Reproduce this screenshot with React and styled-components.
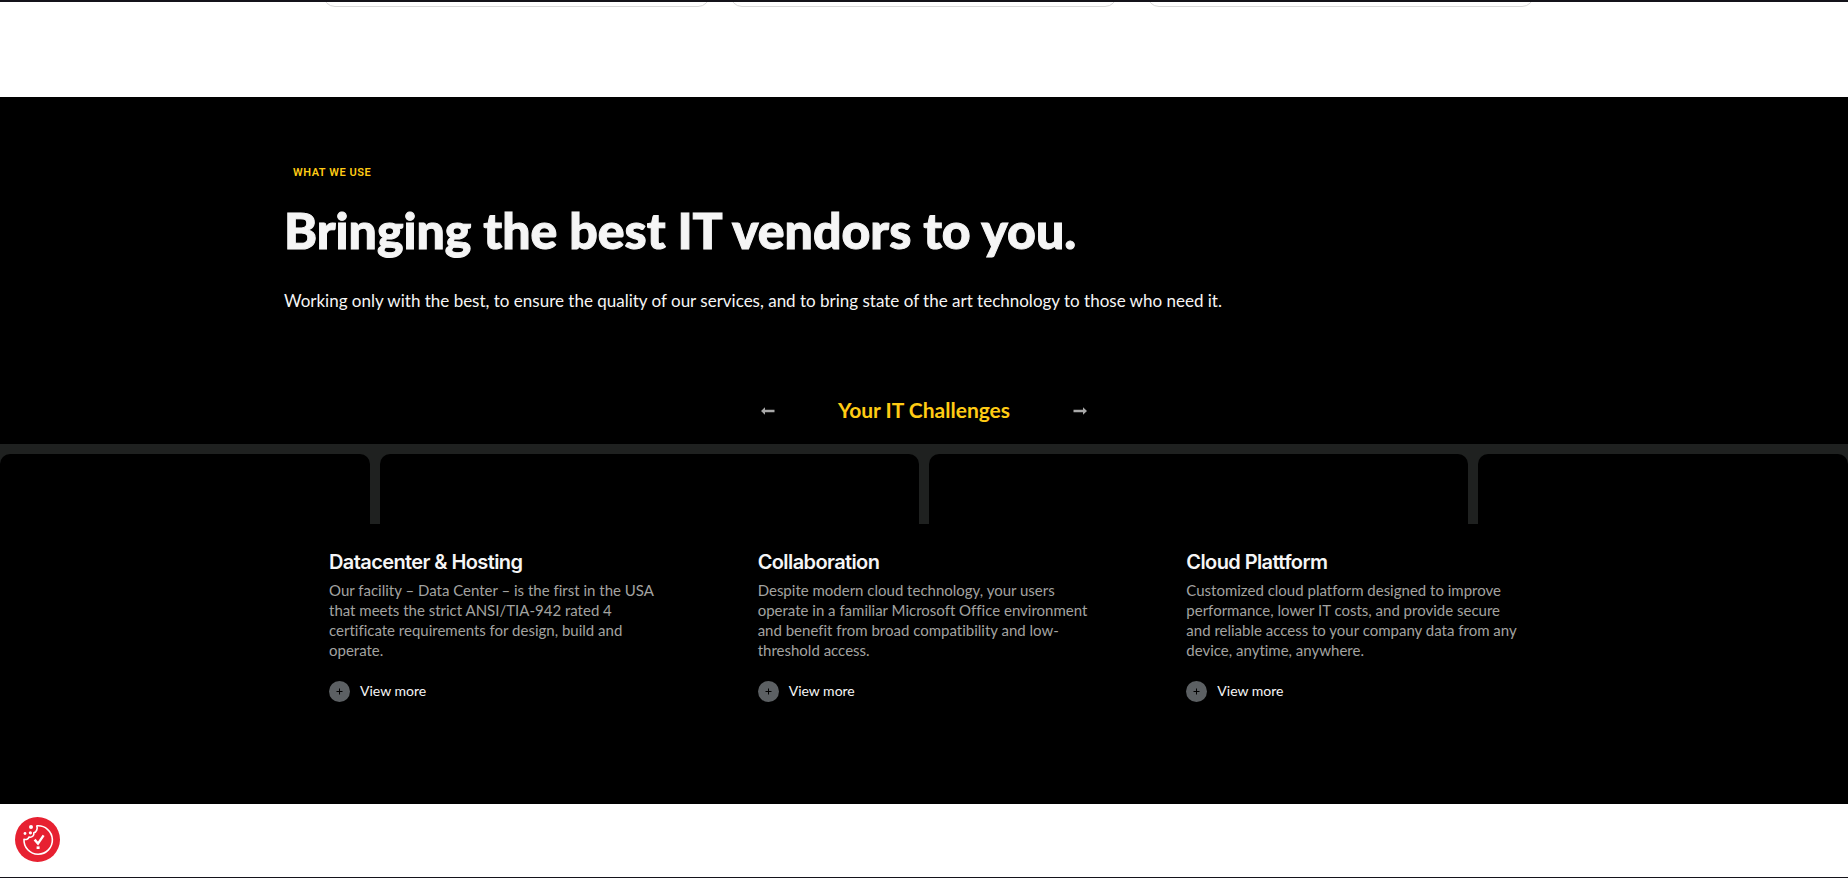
import React from "react";
import styled, { createGlobalStyle } from "styled-components";

const GlobalStyle = createGlobalStyle`
  *, *::before, *::after { box-sizing: border-box; }
  body {
    margin: 0;
    background: #fff;
    font-family: Lato, "Liberation Sans", sans-serif;
    font-variant-ligatures: none;
    color: #f5f5f5;
  }
  h2, h3, p { margin: 0; }
`;

const Page = styled.div`
  display: flex;
  flex-direction: column;
  min-height: 100vh;
  border-top: 2px solid #14131a;
  border-bottom: 1px solid #14131a;
`;

const PreviousSection = styled.section`
  display: flex;
  justify-content: center;
  padding: 0 0 90px 8px;
`;

const CardEnd = styled.div`
  width: 387px;
  height: 5px;
  overflow: hidden;
  display: flex;
  align-items: flex-end;

  &:nth-child(2) {
    margin: 0 30px 0 20px;
  }

  &::after {
    content: "";
    flex: 1;
    height: 40px;
    border: 1px solid #d9d9d9;
    border-radius: 12px;
  }
`;

const Vendors = styled.section`
  background: #000;
  padding: 65px 0 102px;
`;

const Intro = styled.header`
  width: 100%;
  max-width: 1280px;
  margin: 0 auto;
`;

const Eyebrow = styled.p`
  padding-left: 9px;
  font: 600 11px/22px Roboto, sans-serif;
  letter-spacing: 0.05em;
  text-transform: uppercase;
  color: #ffcb14;
`;

const Heading = styled.h2`
  margin-top: 14px;
  font-size: 50px;
  line-height: 64px;
  font-weight: 900;
  -webkit-text-stroke: 1px currentColor;
`;

const Lead = styled.p`
  margin-top: 26px;
  font-size: 17px;
  line-height: 26px;
`;

const Slider = styled.div`
  display: flex;
  justify-content: center;
  align-items: center;
  gap: 55px;
  margin-top: 76px;
  height: 40px;
`;

const ArrowButton = styled.button`
  display: flex;
  padding: 9px 8px 7px;
  border: 0;
  background: none;
  color: #a8a8a8;
  cursor: pointer;
`;

const SlideTitle = styled.h3`
  font-size: 21px;
  line-height: 28px;
  font-weight: 700;
  color: #ffcb14;
`;

const Panels = styled.div`
  display: grid;
  grid-template-columns: 370fr 539fr 539fr 370fr;
  gap: 10px;
  margin-top: 14px;
  padding-top: 10px;
  background: #1f2120;
`;

const Panel = styled.div`
  height: 70px;
  border-radius: 10px 10px 0 0;
  background: #000;
`;

const Services = styled.div`
  display: grid;
  grid-template-columns: repeat(3, 1fr);
  column-gap: 96px;
  width: 100%;
  max-width: 1190px;
  margin: 0 auto;
  padding-top: 24px;
`;

const Service = styled.article`
  display: flex;
  flex-direction: column;
  align-items: flex-start;
`;

const ServiceTitle = styled.h3`
  font: 600 20px/28px Inter, sans-serif;
  letter-spacing: -0.03em;
`;

const ServiceText = styled.p`
  margin-top: 4px;
  font-size: 15px;
  line-height: 20px;
  color: #a3a3a0;
  white-space: nowrap;
`;

const MoreLink = styled.a`
  display: flex;
  align-items: center;
  gap: 10px;
  margin-top: 20px;
  font-size: 14px;
  line-height: 22px;
  color: #f5f5f5;
  text-decoration: none;
`;

const Plus = styled.svg`
  width: 21px;
  height: 21px;
`;

const CookieButton = styled.button`
  position: fixed;
  left: 15px;
  bottom: 16px;
  display: flex;
  width: 45px;
  height: 45px;
  padding: 0;
  border: 0;
  border-radius: 50%;
  background: #e72131;
  cursor: pointer;
`;

const services = [
  {
    title: "Datacenter & Hosting",
    lines: [
      "Our facility – Data Center – is the first in the USA",
      "that meets the strict ANSI/TIA-942 rated 4",
      "certificate requirements for design, build and",
      "operate.",
    ],
  },
  {
    title: "Collaboration",
    lines: [
      "Despite modern cloud technology, your users",
      "operate in a familiar Microsoft Office environment",
      "and benefit from broad compatibility and low-",
      "threshold access.",
    ],
  },
  {
    title: "Cloud Plattform",
    lines: [
      "Customized cloud platform designed to improve",
      "performance, lower IT costs, and provide secure",
      "and reliable access to your company data from any",
      "device, anytime, anywhere.",
    ],
  },
];

function Arrow({ flip }) {
  return (
    <svg width="14" height="8" viewBox="0 0 14 8" fill="currentColor" aria-hidden="true">
      <path
        transform={flip ? "translate(14 0) scale(-1 1)" : undefined}
        d="M0 4 L4 0.3 V2.8 H13.5 V5.2 H4 V7.7 Z"
      />
    </svg>
  );
}

function CookieIcon() {
  return (
    <svg width="45" height="45" viewBox="0 0 45 45" fill="none" aria-hidden="true">
      <path
        d="M21.8 8.9 A14.2 14.2 0 1 1 9 22.2 C11 23 13.4 22.2 14 20 C17 20.8 19.4 18.6 18.8 15.8 C21.6 15.2 22.8 11.6 21.8 8.9 Z"
        stroke="#fff"
        strokeWidth="1.6"
        strokeLinejoin="round"
      />
      <circle cx="16" cy="10" r="2" fill="#fff" />
      <circle cx="10" cy="16.5" r="1.4" fill="#fff" />
      <circle cx="15.4" cy="15.8" r="1.6" fill="#fff" />
      <path d="M19.6 22.6 L23 26.6 L28.6 18.4" stroke="#fff" strokeWidth="2.4" />
      <path d="M21.6 29.4 H24.6 V32 H21.6 Z" fill="#fff" />
    </svg>
  );
}

export default function App() {
  return (
    <>
      <GlobalStyle />
      <Page>
        <PreviousSection>
          <CardEnd />
          <CardEnd />
          <CardEnd />
        </PreviousSection>
        <Vendors>
          <Intro>
            <Eyebrow>What we use</Eyebrow>
            <Heading>Bringing the best IT vendors to you.</Heading>
            <Lead>
              Working only with the best, to ensure the quality of our services, and to bring
              state of the art technology to those who need it.
            </Lead>
          </Intro>
          <Slider>
            <ArrowButton aria-label="Previous">
              <Arrow />
            </ArrowButton>
            <SlideTitle>Your IT Challenges</SlideTitle>
            <ArrowButton aria-label="Next">
              <Arrow flip />
            </ArrowButton>
          </Slider>
          <Panels>
            <Panel />
            <Panel />
            <Panel />
            <Panel />
          </Panels>
          <Services>
            {services.map((service) => (
              <Service key={service.title}>
                <ServiceTitle>{service.title}</ServiceTitle>
                <ServiceText>
                  {service.lines.map((line, i) => (
                    <React.Fragment key={line}>
                      {i > 0 && <br />}
                      {line}
                    </React.Fragment>
                  ))}
                </ServiceText>
                <MoreLink href="#">
                  <Plus viewBox="0 0 21 21" aria-hidden="true">
                    <circle cx="10.5" cy="10.5" r="10.5" fill="#5c6063" />
                    <path d="M7.5 10.5 H13.5 M10.5 7.5 V13.5" stroke="#000" strokeWidth="1" />
                  </Plus>
                  View more
                </MoreLink>
              </Service>
            ))}
          </Services>
        </Vendors>
      </Page>
      <CookieButton aria-label="Cookie settings">
        <CookieIcon />
      </CookieButton>
    </>
  );
}
